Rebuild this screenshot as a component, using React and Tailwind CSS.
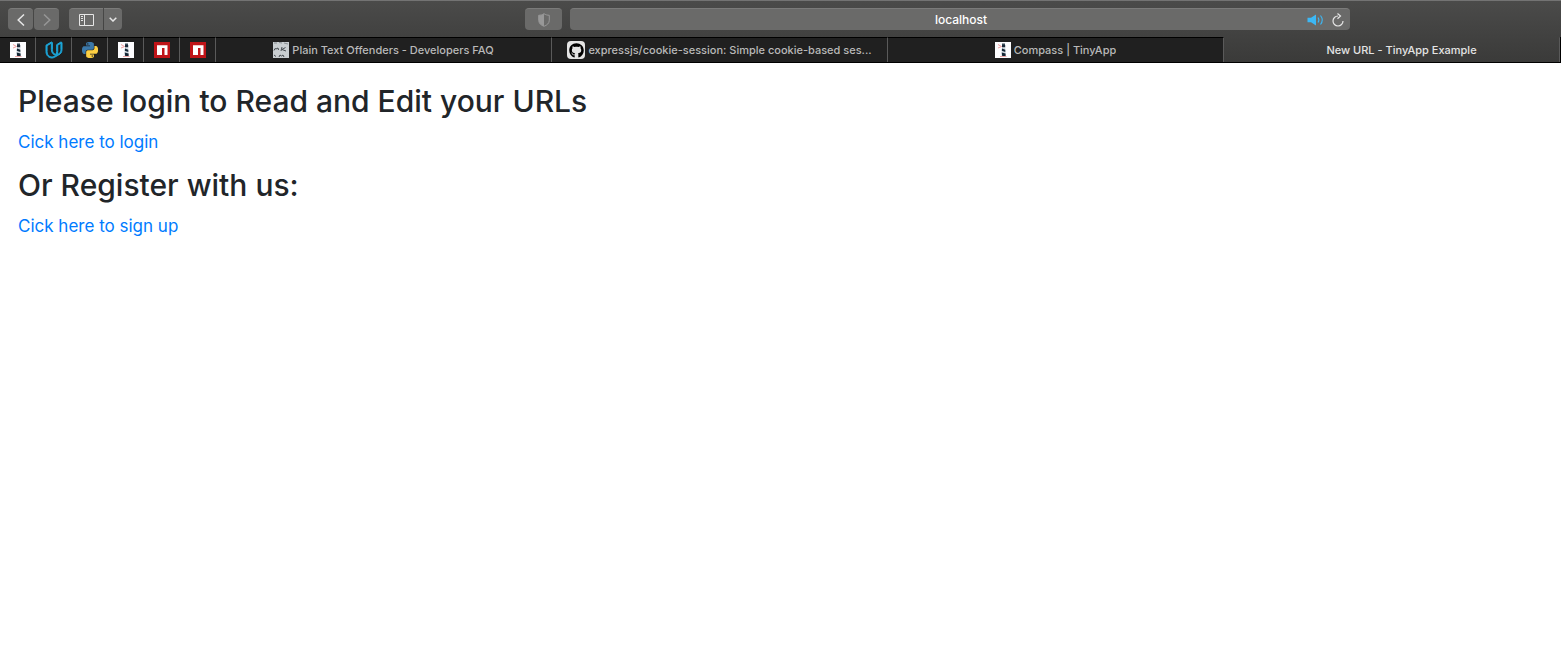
import React from "react";
import { SiUdacity } from "react-icons/si";
import { FaGithub } from "react-icons/fa";

function Lighthouse() {
  return (
    <svg className="size-4 shrink-0" viewBox="0 0 16 16" aria-hidden="true">
      <rect width="16" height="16" fill="#fdfdff" />
      <path d="M3 2.500l3.500 2M3 6l3.500-1.500" stroke="#f3a0a0" strokeWidth="1" />
      <path d="M7 1.500h3v1.500H7z" fill="#3b4a57" />
      <path d="M7 3h3.200v2.500H7z" fill="#1b2b3a" />
      <path d="M7 5.500h3.200l.6 8.500H6.400z" fill="#cfd8de" />
      <path d="M7 6.600l3.300 1.200v2.200L6.800 8.800zM6.700 10.600l3.900 1v2.400H7.200z" fill="#152635" />
      <path d="M5 14.500h6.500" stroke="#eda6a6" strokeWidth="1" />
    </svg>
  );
}

function Python() {
  return (
    <svg className="size-4" viewBox="0 0 24 24" aria-hidden="true">
      <path fill="#3b78a9" d="M14.250.180l.900.200.730.260.590.300.450.320.340.340.250.340.160.330.100.300.040.260.020.200-.010.130V8.500l-.050.630-.130.550-.210.460-.260.380-.300.310-.330.250-.350.190-.350.140-.330.100-.300.070-.260.040-.210.020H8.770l-.690.050-.590.140-.500.220-.410.270-.330.320-.270.350-.200.360-.150.370-.100.350-.070.320-.040.270-.020.210v3.060H3.170l-.210-.030-.280-.070-.320-.120-.350-.180-.360-.260-.360-.360-.350-.460-.320-.590-.280-.730-.210-.880-.140-1.050-.050-1.230.060-1.220.160-1.040.240-.870.320-.710.360-.570.400-.440.420-.330.420-.240.400-.160.360-.100.320-.050.240-.010h.160l.060.010h8.160v-.830H6.180l-.010-2.750-.020-.370.050-.340.110-.310.170-.280.250-.260.310-.230.380-.200.440-.180.510-.150.580-.120.640-.100.710-.060.770-.040.840-.020 1.270.050zm-6.300 1.980l-.230.330-.080.410.080.410.230.340.330.220.410.090.410-.090.330-.220.230-.340.080-.410-.080-.410-.230-.330-.330-.220-.410-.090-.410.090z" />
      <path fill="#fccf43" d="M21.100 6.110l.280.060.320.120.350.180.360.270.360.350.350.470.320.590.280.730.210.880.140 1.040.050 1.230-.060 1.230-.160 1.040-.240.860-.320.710-.360.570-.400.450-.420.330-.420.240-.400.160-.360.090-.320.050-.240.020-.160-.010h-8.220v.820h5.840l.010 2.760.020.360-.050.340-.110.310-.170.290-.250.250-.310.240-.380.200-.440.170-.510.150-.580.130-.640.090-.710.070-.770.040-.840.010-1.270-.040-1.070-.140-.900-.200-.730-.250-.590-.300-.450-.330-.340-.340-.250-.340-.160-.330-.100-.300-.040-.250-.020-.200.010-.130v-5.340l.050-.640.130-.540.210-.460.260-.380.300-.320.330-.240.350-.200.350-.140.330-.100.300-.060.260-.040.210-.020.130-.010h5.840l.690-.050.590-.140.500-.210.410-.280.330-.320.270-.350.200-.360.150-.360.100-.350.070-.320.040-.280.020-.210V6.070h2.090l.140.010zm-6.470 14.250l-.230.330-.080.410.080.410.230.330.330.230.410.080.410-.080.330-.230.230-.330.080-.410-.080-.410-.230-.330-.330-.230-.410-.080-.410.080z" />
    </svg>
  );
}

function Npm() {
  return (
    <svg className="size-4" viewBox="0 0 16 16" aria-hidden="true">
      <rect width="16" height="16" fill="#bf1418" />
      <path d="M3 3.200h10.500V13h-3V6H8v7H3z" fill="#fff" />
    </svg>
  );
}

function Handwriting() {
  return (
    <svg className="size-4 shrink-0" viewBox="0 0 16 16" aria-hidden="true">
      <rect width="16" height="16" fill="#c9ced1" />
      <g fill="none" stroke="#454b50" strokeWidth="1">
        <path d="M1 8.500l1-2 1 .5 2-1 .5 2M9 5l-1 4M12.500 5.500L9 7.500l4 1.500M1 13l2 1.500M6 15l1-2 1.500 1 1.500-1 1 2" />
        <path d="M1 1h3M6 .5l3 .5M11 1l4 1" stroke="#868c90" />
      </g>
    </svg>
  );
}

function Octocat() {
  return (
    <span className="grid size-[18px] shrink-0 place-items-center rounded bg-[#e4e4e4]">
      <FaGithub className="size-[15px] text-black" aria-hidden="true" />
    </span>
  );
}

const pinned = [
  { name: "Compass", icon: <Lighthouse /> },
  {
    name: "Udacity",
    icon: <SiUdacity className="size-4 overflow-visible stroke-[#1ba5d8] stroke-[1.5px] text-[#1ba5d8]" />,
  },
  { name: "Python", icon: <Python /> },
  { name: "Compass activity", icon: <Lighthouse /> },
  { name: "npm", icon: <Npm /> },
  { name: "npm package", icon: <Npm /> },
];

const tabs = [
  { title: "Plain Text Offenders - Developers FAQ", icon: <Handwriting /> },
  { title: "expressjs/cookie-session: Simple cookie-based ses...", icon: <Octocat /> },
  { title: "Compass | TinyApp", icon: <Lighthouse /> },
];

const toolButton =
  "flex h-[22px] items-center justify-center bg-[#6a6a69] border-t border-[#7b7b7a] text-[#e6e6e6]";

function Toolbar() {
  return (
    <div className="flex h-[37px] items-center border-t border-[#737373] pr-[211px] pl-2">
      <div className="flex gap-px">
        <button aria-label="Back" className={`${toolButton} w-[25px] rounded`}>
          <svg className="h-3 w-2" viewBox="0 0 8 12" fill="none" stroke="currentColor" strokeWidth="1.500">
            <path d="M7 .5L1.200 6 7 11.500" />
          </svg>
        </button>
        <button aria-label="Forward" className={`${toolButton} w-[25px] rounded`}>
          <svg className="h-3 w-2" viewBox="0 0 8 12" fill="none" stroke="#969696" strokeWidth="1.500">
            <path d="M1 .5L6.800 6 1 11.500" />
          </svg>
        </button>
      </div>
      <div className="ml-[10px] flex gap-px">
        <button aria-label="Show sidebar" className={`${toolButton} w-[34px] rounded-l`}>
          <svg className="h-3 w-[15px]" viewBox="0 0 15 12" fill="none" stroke="currentColor">
            <path d="M.5.500h14v11H.5zM5.500.500v11M2 2.500h2M2 4.500h2M2 6.500h2" />
          </svg>
        </button>
        <button aria-label="Tab groups" className={`${toolButton} w-[18px] rounded-r`}>
          <svg className="h-[5px] w-2" viewBox="0 0 8 5" fill="none" stroke="currentColor" strokeWidth="1.500">
            <path d="M.7.700L4 4 7.300.700" />
          </svg>
        </button>
      </div>
      <button aria-label="Privacy report" className={`${toolButton} mr-2 ml-auto w-[37px] rounded`}>
        <svg className="h-[14px] w-3" viewBox="0 0 12 14">
          <path d="M6 .700C4.500 1.800 2.500 2.200.700 2.300v5C.7 10.200 3 12.300 6 13.300c3-1 5.300-3.100 5.300-6v-5C9.500 2.200 7.500 1.800 6 .700z" fill="none" stroke="#989898" />
          <path d="M6 .700v12.600C3 12.300.700 10.200.700 7.300v-5C2.500 2.200 4.500 1.800 6 .700z" fill="#989898" />
        </svg>
      </button>
      <div className="flex h-[22px] w-[780px] items-center rounded border-t border-[#7b7b7a] bg-[#6a6a69] pr-[6px]">
        <input
          aria-label="Address"
          defaultValue="localhost"
          className="h-5 min-w-0 flex-1 bg-transparent pl-[45px] text-center text-[12px] font-medium text-white outline-none"
        />
        <button aria-label="Mute tab" className="text-[#3cb8f5]">
          <svg className="h-3 w-[18px]" viewBox="0 0 18 12">
            <path d="M.500 3.800h3.500l5-3.300v11L4 8.200H.5z" fill="currentColor" />
            <path d="M11 3.500q1.800 2.500 0 5M13.500 1.500q3.500 4.500 0 9" fill="none" stroke="currentColor" strokeWidth="1.100" />
          </svg>
        </button>
        <button aria-label="Reload" className="ml-[7px] text-[#e6e6e6]">
          <svg className="h-[14px] w-3" viewBox="0 0 12 14" fill="none" stroke="currentColor" strokeWidth="1.200">
            <path d="M6 3a5 5 0 1 0 5 5" />
            <path d="M5.500.500L8.500 3 5.500 5.700" />
          </svg>
        </button>
      </div>
    </div>
  );
}

function TabBar() {
  return (
    <nav aria-label="Tabs" className="flex h-[26px] border-b border-black text-[11px] font-medium">
      {pinned.map((tab) => (
        <button
          key={tab.name}
          aria-label={tab.name}
          className="flex w-9 shrink-0 items-center justify-center border-t border-r border-t-black border-r-[#5a5a5a] bg-[#202020]"
        >
          {tab.icon}
        </button>
      ))}
      <div className="grid min-w-0 flex-1 grid-cols-4">
        {tabs.map((tab) => (
          <button
            key={tab.title}
            className="flex min-w-0 items-center justify-center gap-[3px] border-t border-r border-t-black border-r-[#5a5a5a] bg-[#202020] px-2 text-[#b9b9b9]"
          >
            {tab.icon}
            <span className="truncate">{tab.title}</span>
          </button>
        ))}
        <button className="min-w-0 truncate border-t border-r border-t-transparent border-r-[#5a5a5a] pl-5 text-[#e4e4e4]">
          New URL - TinyApp Example
        </button>
      </div>
      <span className="w-px bg-black" />
    </nav>
  );
}

export default function App() {
  return (
    <div className="min-h-screen bg-white font-['Inter',sans-serif]">
      <header className="bg-linear-to-b from-[#4b4b4a] to-[#3a3a39]">
        <Toolbar />
        <TabBar />
      </header>
      <main className="px-[18px] pt-[19px] text-[17px] leading-[27px] text-[#212529]">
        <h1 className="mb-[9px] text-[30px] leading-[38px] font-medium">Please login to Read and Edit your URLs</h1>
        <a href="#login" className="text-[#007bff]">Cick here to login</a>
        <h1 className="mt-[10px] mb-[9px] text-[30px] leading-[38px] font-medium">Or Register with us:</h1>
        <a href="#register" className="text-[#007bff]">Cick here to sign up</a>
      </main>
    </div>
  );
}
